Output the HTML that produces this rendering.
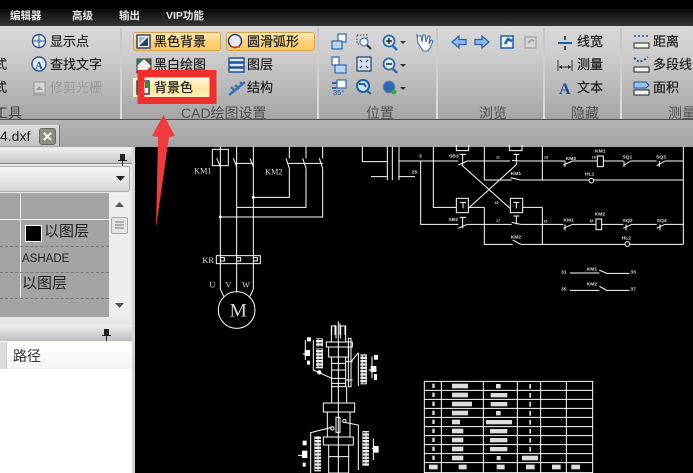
<!DOCTYPE html>
<html><head><meta charset="utf-8">
<style>
html,body{margin:0;padding:0;background:#000;}
#r{position:relative;width:693px;height:473px;overflow:hidden;background:#000;font-family:"Liberation Sans","Noto Sans CJK SC",sans-serif;}
#r div{position:absolute;}
.t{font-size:13px;line-height:16px;color:#1c1c1c;white-space:nowrap;-webkit-text-stroke:.2px #1c1c1c;}
.m{font-size:10.5px;line-height:14px;color:#e8e8e8;top:9px;white-space:nowrap;font-weight:bold;}
.l{font-size:14px;line-height:16px;color:#505050;top:105px;white-space:nowrap;}
.sep{top:28px;width:2px;height:91px;background:linear-gradient(#c4c4c4,#dedede);}
svg{position:absolute;left:0;top:0;}
svg text{font-family:"Liberation Sans","Noto Sans CJK SC",sans-serif;}
svg text.s{font-family:"Liberation Serif",serif;}
</style></head><body><div id="r">
<div style="left:0;top:0;width:693px;height:9px;background:#000"></div>
<div style="left:0;top:9px;width:693px;height:17px;background:linear-gradient(#0a0a0a,#363636)"></div>
<div class="m" style="left:10px">编辑器</div>
<div class="m" style="left:72px">高级</div>
<div class="m" style="left:119px">输出</div>
<div class="m" style="left:166px">VIP功能</div>
<div style="left:0;top:26px;width:693px;height:93px;background:linear-gradient(#d9d9d9,#cbcbcb 35%,#a5a5a5)"></div>
<div style="left:0;top:119px;width:693px;height:1px;background:#4c4c4c"></div>
<div style="left:0;top:120px;width:693px;height:27px;background:linear-gradient(#b4b4b4,#a4a4a4)"></div>
<div class="sep" style="left:120px"></div><div class="sep" style="left:317px"></div><div class="sep" style="left:436px"></div><div class="sep" style="left:543px"></div><div class="sep" style="left:620px"></div>

<div style="left:133px;top:32px;width:88px;height:19px;border-radius:3px;box-sizing:border-box;border:1px solid #d8a24a;background:linear-gradient(#fdebb8,#fdd27a 50%,#fbc95e)"></div>
<div style="left:226px;top:32px;width:89px;height:19px;border-radius:3px;box-sizing:border-box;border:1px solid #d8a24a;background:linear-gradient(#fdebb8,#fdd27a 50%,#fbc95e)"></div>
<div style="left:133px;top:78px;width:78px;height:19px;background:linear-gradient(#fff8dc,#fde49a 60%,#fff0bf)"></div>

<div class="t" style="left:50px;top:34px">显示点</div>
<div class="t" style="left:50px;top:57px">查找文字</div>
<div class="t" style="left:50px;top:80px;color:#9a9a9a;-webkit-text-stroke:0">修剪光栅</div>
<div class="t" style="left:-6px;top:57px">式</div>
<div class="t" style="left:-6px;top:80px">式</div>
<div class="l" style="left:-6px;color:#444">工具</div>
<div class="t" style="left:154px;top:34px">黑色背景</div>
<div class="t" style="left:247px;top:34px">圆滑弧形</div>
<div class="t" style="left:154px;top:57px">黑白绘图</div>
<div class="t" style="left:247px;top:57px">图层</div>
<div class="t" style="left:154px;top:80px">背景色</div>
<div class="t" style="left:247px;top:80px">结构</div>
<div class="l" style="left:181px">CAD绘图设置</div>
<div class="l" style="left:366px">位置</div>
<div class="l" style="left:479px">浏览</div>
<div class="l" style="left:571px">隐藏</div>
<div class="l" style="left:668px">测量</div>
<div class="t" style="left:577px;top:34px">线宽</div>
<div class="t" style="left:577px;top:57px">测量</div>
<div class="t" style="left:577px;top:80px">文本</div>
<div class="t" style="left:653px;top:34px">距离</div>
<div class="t" style="left:653px;top:57px">多段线</div>
<div class="t" style="left:653px;top:80px">面积</div>

<!-- tab -->
<div style="left:0;top:125px;width:59px;height:21px;background:linear-gradient(#dcdcdc,#c2c2c2);border-right:1px solid #777"></div>
<div style="left:0;top:126px;font-size:14px;line-height:20px;color:#222">4.dxf</div>
<div style="left:39px;top:128px;width:15px;height:15px;border-radius:3px;background:#8f8f80;border:1px solid #666;color:#fff;font-size:17px;line-height:15px;text-align:center;font-weight:bold">×</div>

<!-- left panels -->
<div style="left:0;top:147px;width:135px;height:326px;background:#e8e8e8"></div>
<div style="left:0;top:148px;width:132px;height:15px;background:linear-gradient(#f0f0f0,#c4c6ca);border-bottom:1px solid #888"></div>
<div style="left:0;top:166px;width:130px;height:26px;border-radius:0 0 3px 0;border:1px solid #aaa;border-left:0;box-sizing:border-box;background:linear-gradient(#f7f7f7,#d6d6d6)"></div>
<div style="left:0;top:193px;width:109px;height:124px;background:#a4a4a4"></div>
<div style="left:109px;top:193px;width:21px;height:124px;background:#eeeeee"></div>
<div style="left:20px;top:193px;width:1px;height:105px;background:#eee"></div>
<div style="left:0;top:219px;width:109px;height:1px;background:#eee"></div>
<div style="left:0;top:246px;width:109px;border-top:1px dashed #777"></div>
<div style="left:0;top:272px;width:109px;border-top:1px dashed #777"></div>
<div style="left:0;top:298px;width:109px;border-top:1px dashed #777"></div>
<div style="left:25px;top:225px;width:15px;height:15px;background:#000;border:1px solid #fff"></div>
<div style="left:44px;top:223px;font-size:15px;line-height:18px;color:#222">以图层</div>
<div style="left:22px;top:252px;font-size:11.5px;line-height:14px;color:#222">ASHADE</div>
<div style="left:22px;top:275px;font-size:15px;line-height:18px;color:#222">以图层</div>
<div style="left:111px;top:217px;width:17px;height:17px;box-sizing:border-box;border:1px solid #aaa;border-radius:2px;background:#e4e4e4"></div>
<div style="left:0;top:325px;width:132px;height:16px;background:linear-gradient(#eeeeee,#bcbec2);border-bottom:1px solid #888"></div>
<div style="left:0;top:341px;width:132px;height:132px;background:#fff"></div>
<div style="left:0;top:341px;width:132px;height:28px;background:linear-gradient(#fff,#f4f4f4)"></div>
<div style="left:0;top:342px;width:6px;height:27px;background:#ddd"></div>
<div style="left:6px;top:342px;width:1px;height:27px;background:#ccc"></div>
<div style="left:13px;top:348px;font-size:14px;line-height:17px;color:#333">路径</div>
<div style="left:132px;top:147px;width:3px;height:326px;background:#d4d4d4"></div>

<svg width="693" height="473" viewBox="0 0 693 473">
<defs><pattern id="p" width="12" height="10" patternUnits="userSpaceOnUse"><rect width="12" height="7" fill="#eee"/><rect x="4" y="7" width="5" height="3" fill="#999"/></pattern></defs>
<!-- panel glyphs -->
<g fill="#222"><path d="M116 162l5 0 0 6 2 0 0 1-4 0 0 5-1 0 0-5-4 0 0-1 2 0z" transform="translate(4,-8)"/>
<path d="M116 162l5 0 0 6 2 0 0 1-4 0 0 5-1 0 0-5-4 0 0-1 2 0z" transform="translate(-12,167)"/>
<path d="M116 176h9l-4.500 5z"/><path d="M115 207h9l-4.500-5zM115 303h9l-4.500 5z" fill="#555"/></g>
<path d="M115 222h9M115 225h9M115 228h9" stroke="#777" fill="none"/>
<!-- ribbon icons left -->
<g>
<circle cx="39" cy="41" r="6.500" fill="#e8f0fa" stroke="#33558a" stroke-width="1.400"/><path d="M39 34v14M32 41h14" stroke="#33558a"/><circle cx="39" cy="41" r="2" fill="#5a8ad0"/>
<circle cx="39" cy="64" r="7" fill="#dfe9f7" stroke="#33558a" stroke-width="1.400"/><text class="s" x="35" y="69" font-size="11" font-weight="bold" fill="#1d4b9a">A</text>
<rect x="34" y="82" width="11" height="11" fill="#d6d6d6" stroke="#999"/><path d="M36 90l3-4 4 4z" fill="#999"/><path d="M33 95h13" stroke="#999"/>
<rect x="137" y="35" width="13" height="13" fill="#fff" stroke="#27416e" stroke-width="1.500"/><path d="M139 46l9-9v9z" fill="#27416e"/><path d="M139 37h7l-7 7z" fill="#9fb6d6"/>
<rect x="137" y="59" width="14" height="14" fill="#f0f0f0" stroke="#334"/><path d="M137 59h7l-7 7z" fill="#2f7d3a"/><path d="M151 73h-7l7-7z" fill="#c43a3a"/><path d="M144 59h7v7z" fill="#555"/>
<rect x="137" y="81" width="12" height="13" fill="#fff" stroke="#27416e" stroke-width="1.500"/><rect x="145" y="82" width="5" height="6" fill="#2f8f3a"/>
<circle cx="235" cy="41" r="6.500" fill="#e8e8ff" stroke="#27416e" stroke-width="1.500"/><path d="M231 47h9" stroke="#c05a20" stroke-width="1.500"/>
<g fill="#dbe7f5" stroke="#1f4f96" stroke-width="1.400"><path d="M229 68h15v4h-15z"/><path d="M229 63h15v4h-15z"/><path d="M229 58h15v4h-15z"/></g>
<path d="M229 95l16-13M231 87l3 3M235 85l4 4M240 82l3 3" stroke="#3c6fbe" stroke-width="2.500" fill="none"/>
<!-- position group -->
<g fill="#fff" stroke="#2b69ad" stroke-width="1.200">
<rect x="338" y="34" width="8" height="8"/><rect x="332" y="41" width="10" height="8" fill="#bcd6ef"/>
<rect x="332" y="57" width="7" height="8"/><rect x="335" y="65" width="11" height="8" fill="#bcd6ef"/>
<rect x="337" y="80" width="9" height="8"/>
</g>
<path d="M332 83h5M332 88h4" stroke="#2b69ad" stroke-width="2" fill="none"/>
<text x="333" y="95" font-size="7.500" fill="#1f4f96">35°</text>
<rect x="357" y="35" width="10" height="9" fill="none" stroke="#444" stroke-dasharray="1.500 1.500"/>
<circle cx="364" cy="42" r="4" fill="#eaf2fb" stroke="#2b69ad"/><path d="M367 45l4 4" stroke="#333" stroke-width="2"/>
<rect x="357" y="57" width="14" height="14" fill="#d4dfea" stroke="#1f3f70" stroke-width="1.200"/>
<path d="M360 60l2 2M368 60l-2 2M360 68l2-2M368 68l-2-2" stroke="#1f3f70" stroke-width="1.200"/>
<circle cx="363" cy="86" r="6" fill="#cfe2f5" stroke="#1f5fa6" stroke-width="2"/><path d="M359 84h5l2 3M367 91l4 3" stroke="#1f5fa6" stroke-width="2" fill="none"/>
<g fill="#e4eef9" stroke="#2b69ad" stroke-width="1.800"><circle cx="389" cy="41" r="5.500"/><circle cx="389" cy="64" r="5.500"/></g>
<path d="M386 41h6M389 38v6M386 64h6" stroke="#1a2a3a" stroke-width="1.500"/>
<path d="M393 46l4 4M393 69l4 4" stroke="#2b69ad" stroke-width="2.500"/>
<circle cx="389" cy="87" r="6" fill="#2f66b5" stroke="#7b8da0"/><circle cx="394" cy="92" r="2.500" fill="#35b03a"/>
<g fill="#333"><path d="M400 41h6l-3 3zM400 64h6l-3 3zM400 87h6l-3 3z"/></g>
<path d="M418 36l3 0 1 6 1-7h2l1 7 2-6h2l-1 8 2-4 2 1-3 7-2 3h-5l-3-5-2-3-1-8z" fill="#fff" stroke="#3d6da8" stroke-width="1.100"/>
<!-- browse -->
<g fill="#8db6ea" stroke="#2a5fae" stroke-width="1.200">
<path d="M452 42l7-6v3.500h7v5h-7v3.500z"/><path d="M489 42l-7-6v3.500h-7v5h7v3.500z"/></g>
<rect x="501" y="36" width="12" height="12" fill="#e7f0fb" stroke="#1f5fa6" stroke-width="1.500"/><path d="M505 44l3-5 4 2" stroke="#1f5fa6" stroke-width="2.500" fill="none"/>
<rect x="525" y="37" width="11" height="11" fill="#d8d8d8" stroke="#a4a4a4" stroke-width="1.300"/><path d="M528 43l3-3 3 1" stroke="#a4a4a4" stroke-width="2" fill="none"/>
<!-- hide -->
<path d="M558 43h14" stroke="#1f5fa6" stroke-width="2"/><path d="M565 36v4M565 46v4" stroke="#222" stroke-width="1.500"/>
<path d="M558 60v11M572 60v11" stroke="#333"/><path d="M559 67h12" stroke="#222"/><path d="M559 67l3-2v4zM571 67l-3-2v4z" fill="#222"/>
<text class="s" x="559" y="94" font-size="16" font-weight="bold" fill="#1f4f96">A</text>
<!-- measure -->
<g>
<path d="M634 36h14" stroke="#1f4f96" stroke-width="1.500" stroke-dasharray="2 2"/>
<rect x="634" y="43" width="15" height="5" fill="#f5f5f0" stroke="#222"/>
<path d="M634 58l5 4 5-2 4-3" stroke="#1f4f96" stroke-width="2" stroke-dasharray="2 2" fill="none"/>
<rect x="634" y="67" width="15" height="5" fill="#f5f5f0" stroke="#222"/>
<path d="M634 82h12l3 3-3 3h-12z" fill="#9dc0ea" stroke="#1f4f96"/>
<rect x="634" y="90" width="15" height="5" fill="#f5f5f0" stroke="#222"/>
</g>
</g>
<!-- red highlight -->
<rect x="141" y="73.500" width="72" height="27" fill="none" stroke="#ef2f2e" stroke-width="7"/>
<path d="M163.500 115L175 136 169 137 156 228 158 137 152 136z" fill="#f23a3c"/>

<!-- drawing: left motor circuit -->
<g transform="translate(160,145) scale(.33333)" fill="none" stroke="#fff" stroke-width="3">
<path d="M181 5V432M230 5V442M280 5V432"/>
<rect x="157" y="13" width="48" height="49"/>
<path d="M225 55H275M385 55H488M388 5V40M438 5V40M488 5V40"/>
<path d="M170 40l11 25M220 40l10 25M270 40l10 25M378 40l10 30M428 40l10 30M478 40l10 30"/>
<path d="M388 70V157H280M438 70V187H230M488 70V216H181"/>
<rect x="169" y="332" width="132" height="24"/>
<path d="M181 338h12v10h-12M230 338h12v10h-12M280 338h12v10h-12"/>
<path d="M181 432l10 22M280 432l-10 22"/>
<circle cx="230" cy="495" r="55"/>
<circle cx="280" cy="157" r="3" fill="#fff"/><circle cx="181" cy="216" r="3" fill="#fff"/>
<path d="M607 5V50H680M633 95H680M682 5V105M697 5V105M717 5V105"/>
<path d="M515 570V545M525 570V540M540 570V535M555 570V545"/>
<g fill="#ddd" stroke="none" font-size="25">
<text class="s" x="102" y="85">KM1</text><text class="s" x="315" y="88">KM2</text><text class="s" x="127" y="354">KR</text><text class="s" x="148" y="427">U</text><text class="s" x="196" y="427">V</text><text class="s" x="246" y="427">W</text>
<text class="s" x="209" y="514" font-size="58">M</text></g>
</g>

<!-- drawing: right control circuit -->
<g transform="translate(390,145) scale(.33333)" fill="none" stroke="#fff" stroke-width="3">
<path d="M25 48H205M232 48H360M390 48H525M548 48H622M640 48H700M722 48H800M825 48H880"/>
<path d="M92 48V238H205M232 238H365M392 238H520M548 238H618M636 238H700M725 238H800M825 238H880"/>
<path d="M25 95H75M130 5V187H199M283 5V105H365M390 105H596M612 105H880M457 5V105M880 5V298"/>
<path d="M283 187V298H368M392 298H705M720 298H880M457 187V298M398 187H457M235 187H283"/>
<path d="M215 60L360 190M378 60L235 190"/>
<rect x="199" y="160" width="36" height="43"/><rect x="361" y="160" width="37" height="43"/>
<path d="M199 0V17H236V0M358 0V17H396V0"/>
<rect x="622" y="33" width="18" height="32"/><rect x="618" y="222" width="17" height="32"/>
<circle cx="604" cy="107" r="7"/><circle cx="712" cy="297" r="7"/>
<path d="M209 28H228M218 28V62M205 60L232 48M370 28H388M379 28V60M366 46L390 48M525 48v18M520 60L548 48M702 66V48M700 62L722 48M808 66V48M800 62L825 48"/>
<path d="M209 217H228M218 217V250M205 250L232 238M370 213H388M379 213V238M365 232L392 238M525 256V238M520 250L548 238M708 256V238M700 250L725 238M810 256V238M800 250L825 238"/>
<path d="M362 98L390 105M368 285L392 298M210 172H228M219 172V190M370 172H388M379 172V190"/>
<path d="M540 384H628M628 375L650 385H718M540 436H628M628 424L650 436H718"/>
<g fill="#ddd" stroke="none" font-size="15" font-weight="bold">
<text x="177" y="38">SB3</text><text x="318" y="41" font-size="11">11</text><text x="462" y="41" font-size="11">13</text><text x="527" y="45">KM2</text><text x="605" y="41" font-size="11">18</text><text x="615" y="23">KM1</text><text x="697" y="41">SQ1</text><text x="798" y="41">SQ3</text>
<text x="362" y="90">KM1</text><text x="585" y="92">HL1</text><text x="87" y="38">3</text><text x="65" y="86">25</text><text x="175" y="228">SB2</text><text x="318" y="231" font-size="11">17</text><text x="460" y="232" font-size="11">15</text><text x="520" y="230">KM1</text><text x="598" y="231" font-size="11">18</text><text x="614" y="212">KM2</text><text x="698" y="231">SQ2</text><text x="800" y="231">SQ4</text>
<text x="362" y="281">KM2</text><text x="695" y="284">HL2</text><text x="313" y="177" font-size="11">19</text>
<text x="513" y="386">31</text><text x="590" y="377">KM1</text><text x="721" y="386">33</text><text x="513" y="437">35</text><text x="590" y="422">KM2</text><text x="721" y="437">37</text></g>
</g>

<!-- drawing: mechanical + table -->
<g transform="translate(280,310) scale(.33333)" fill="none" stroke="#fff" stroke-width="3">
<path d="M175 34V489"/>
<path d="M154 96V48H168V85M182 85V48H197V96"/>
<rect x="139" y="96" width="78" height="15"/><rect x="146" y="111" width="60" height="30"/>
<rect x="155" y="141" width="42" height="89"/><path d="M155 160H197M155 180H197M155 205H197M155 220H197"/>
<path d="M155 230V279M200 230V279"/><rect x="130" y="279" width="94" height="27"/>
<rect x="142" y="306" width="68" height="75"/><rect x="130" y="381" width="90" height="24"/>
<rect x="146" y="405" width="60" height="84"/><path d="M146 440H206"/>
<rect x="205" y="85" width="8" height="145"/><path d="M197 155H218M197 210H218"/>
<path d="M100 90V180L155 205M235 128L213 155M235 128V228M76 90V150M68 132H90M276 140V205M266 180H290"/>
<path d="M92 489V368L155 352M197 338L235 345V480M280 385V450M54 436H80M276 415H295"/>
<rect x="168" y="322" width="12" height="45"/><circle cx="157" cy="355" r="5"/><circle cx="193" cy="333" r="5"/>
<circle cx="118" cy="187" r="5" fill="#fff"/>
<g fill="url(#p)" stroke="none">
<rect x="108" y="85" width="21" height="25"/><rect x="108" y="115" width="21" height="60"/>
<rect x="241" y="133" width="20" height="90"/><rect x="103" y="378" width="20" height="106"/><rect x="247" y="363" width="20" height="105"/>
</g>
<g fill="#fff" stroke="none">
<rect x="81" y="82" width="12" height="12"/><rect x="74" y="120" width="16" height="18"/><rect x="81" y="152" width="9" height="12"/>
<rect x="282" y="135" width="12" height="14"/><rect x="272" y="168" width="17" height="18"/><rect x="282" y="192" width="9" height="18"/>
<rect x="68" y="392" width="12" height="14"/><rect x="66" y="422" width="16" height="22"/><rect x="68" y="458" width="9" height="12"/><rect x="280" y="408" width="16" height="20"/>
</g>
<path d="M433 214H938V488H433ZM433 241H938M433 268H938M433 295H938M433 322H938M433 350H938M433 377H938M433 404H938M433 431H938M433 458H938M484 214V488M610 214V488M712 214V488M782 214V488M859 214V488"/>
<g fill="#ddd" stroke="none">
<rect x="457" y="221" width="7" height="13"/><rect x="516" y="221" width="48" height="14"/><rect x="648" y="222" width="14" height="13"/><rect x="748" y="222" width="5" height="14"/>
<rect x="457" y="248" width="7" height="13"/><rect x="516" y="248" width="48" height="14"/><rect x="632" y="249" width="50" height="13"/><rect x="748" y="249" width="5" height="14"/>
<rect x="457" y="275" width="7" height="13"/><rect x="516" y="275" width="60" height="14"/><rect x="632" y="276" width="50" height="13"/><rect x="748" y="276" width="5" height="14"/>
<rect x="457" y="302" width="7" height="13"/><rect x="516" y="302" width="48" height="14"/><rect x="648" y="303" width="14" height="13"/><rect x="748" y="303" width="5" height="14"/>
<rect x="457" y="329" width="7" height="13"/><rect x="516" y="329" width="24" height="14"/><rect x="618" y="330" width="78" height="13"/><rect x="748" y="330" width="5" height="14"/>
<rect x="457" y="356" width="7" height="13"/><rect x="516" y="356" width="34" height="14"/><rect x="630" y="357" width="52" height="13"/><rect x="748" y="357" width="5" height="14"/>
<rect x="457" y="383" width="7" height="13"/><rect x="516" y="383" width="34" height="14"/><rect x="630" y="384" width="52" height="13"/><rect x="748" y="384" width="5" height="14"/>
<rect x="457" y="410" width="7" height="13"/><rect x="516" y="410" width="34" height="14"/><rect x="630" y="411" width="52" height="13"/><rect x="748" y="411" width="5" height="14"/>
<rect x="457" y="437" width="7" height="13"/><rect x="516" y="437" width="34" height="14"/><rect x="650" y="438" width="12" height="12"/><rect x="726" y="437" width="48" height="14"/>
<rect x="447" y="464" width="26" height="14"/><rect x="536" y="464" width="24" height="14"/><rect x="650" y="464" width="24" height="14"/><rect x="738" y="464" width="26" height="14"/><rect x="816" y="464" width="26" height="14"/><rect x="874" y="464" width="26" height="14"/>
</g>
</g>
</svg>
</div></body></html>
